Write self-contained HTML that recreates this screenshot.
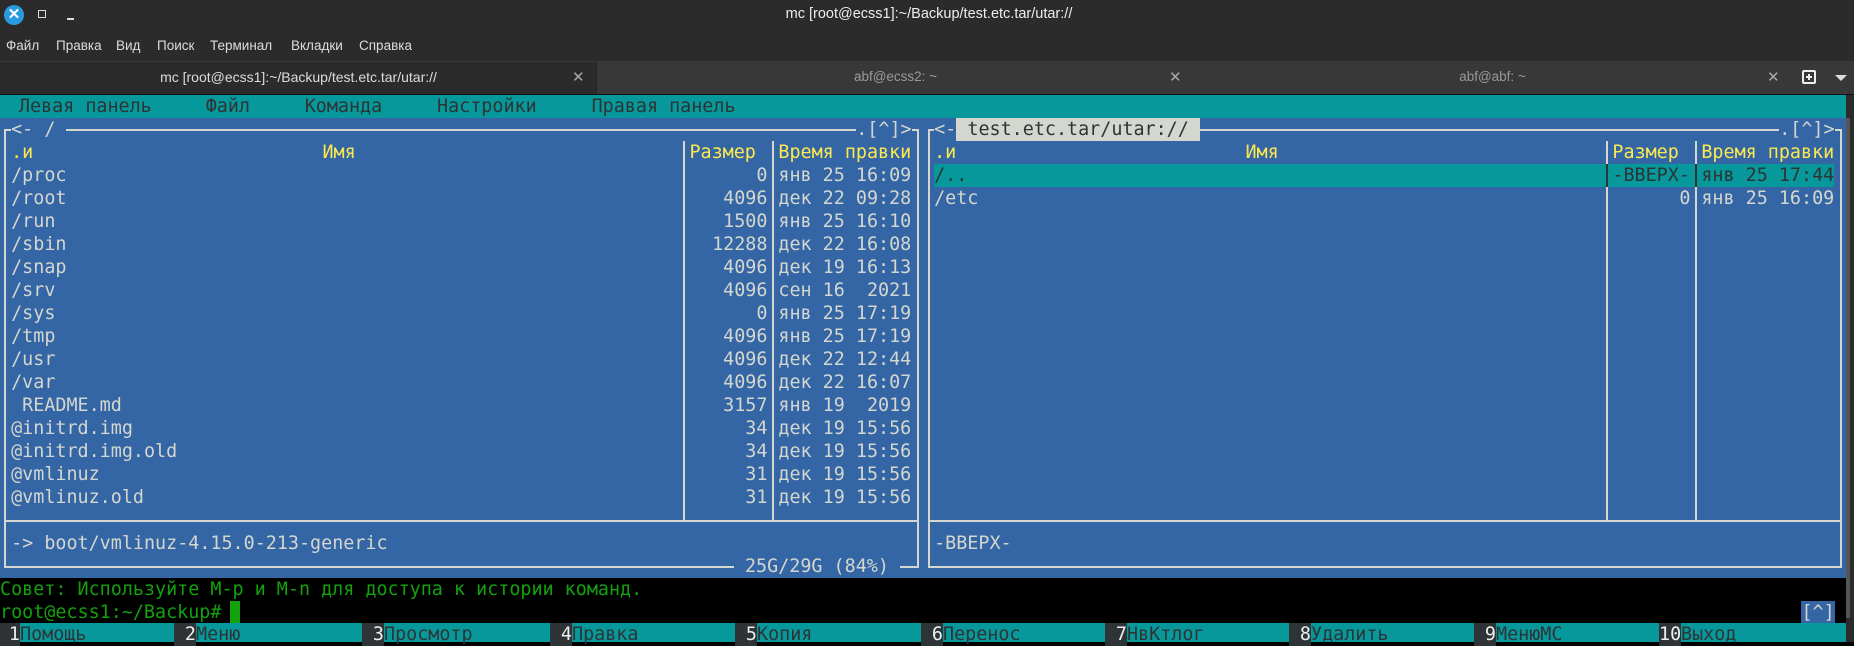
<!DOCTYPE html>
<html><head><meta charset="utf-8"><style>
*{margin:0;padding:0;box-sizing:border-box}
body{width:1854px;height:642px;overflow:hidden;background:#000;position:relative;font-family:"DejaVu Sans Mono","Liberation Mono",monospace}
.ui{font-family:"Liberation Sans","DejaVu Sans",sans-serif;position:absolute;white-space:nowrap}
.m{top:38px;color:#ddd;font-size:13.5px}
.t{position:absolute;left:calc(var(--c)*11.12px);top:calc(95px + var(--r)*23px);height:23px;line-height:23px;font-size:18.4px;white-space:pre;color:#d3d7cf}
.y{color:#fce94f}
.rt{text-align:right}
.bg{background:#3465a4}
.hl{position:absolute;height:2px;background:#d3d7cf}
.vl{position:absolute;width:2px;background:#d3d7cf}
.k{position:absolute;top:623px;height:23px;line-height:23px;font-size:18.4px;white-space:pre}
.kn{background:#2e3436;color:#eee;display:inline-block;width:22px;text-align:right}
.kl{color:#2e3436}
</style></head><body>
<!-- title bar -->
<div style="position:absolute;left:0;top:0;width:1854px;height:31px;background:#2b2b2b"></div>
<div style="position:absolute;left:4px;top:5px;width:20px;height:20px;border-radius:50%;background:#2a9ae0;color:#fff;font:bold 15px 'Liberation Sans';text-align:center;line-height:20px">✕</div>
<div style="position:absolute;left:38px;top:10px;width:8px;height:8px;border:1.5px solid #ddd"></div>
<div style="position:absolute;left:67px;top:18px;width:7px;height:1.5px;background:#ddd"></div>
<div class="ui" style="left:0;width:1854px;top:6px;text-align:center;color:#eee;font-size:14.5px;padding-left:4px">mc [root@ecss1]:~/Backup/test.etc.tar/utar://</div>
<!-- menu bar -->
<div style="position:absolute;left:0;top:31px;width:1854px;height:30px;background:#2b2b2b"></div>
<div class="ui m" style="left:6px">Файл</div>
<div class="ui m" style="left:56px">Правка</div>
<div class="ui m" style="left:116px">Вид</div>
<div class="ui m" style="left:157px">Поиск</div>
<div class="ui m" style="left:210px">Терминал</div>
<div class="ui m" style="left:291px">Вкладки</div>
<div class="ui m" style="left:359px">Справка</div>
<!-- tab bar -->
<div style="position:absolute;left:0;top:61px;width:1854px;height:34px;background:#383838"></div>
<div style="position:absolute;left:0;top:62px;width:597px;height:32px;background:#2b2b2b;border-right:1px solid #222"></div>
<div class="ui" style="left:0;width:597px;top:69px;text-align:center;color:#ddd;font-size:14px">mc [root@ecss1]:~/Backup/test.etc.tar/utar://</div>
<div class="ui" style="left:572px;top:68px;color:#aaa;font-size:15px">✕</div>
<div class="ui" style="left:597px;width:597px;top:69px;text-align:center;color:#999;font-size:13.5px">abf@ecss2: ~</div>
<div class="ui" style="left:1169px;top:68px;color:#aaa;font-size:15px">✕</div>
<div class="ui" style="left:1194px;width:597px;top:69px;text-align:center;color:#999;font-size:13.5px">abf@abf: ~</div>
<div class="ui" style="left:1767px;top:68px;color:#aaa;font-size:15px">✕</div>
<div style="position:absolute;left:1802px;top:70px;width:14px;height:14px;border:2px solid #eee;border-radius:2px"></div>
<div style="position:absolute;left:1806px;top:76px;width:6px;height:2px;background:#eee"></div>
<div style="position:absolute;left:1808px;top:74px;width:2px;height:6px;background:#eee"></div>
<div style="position:absolute;left:1835px;top:75px;width:0;height:0;border-left:6px solid transparent;border-right:6px solid transparent;border-top:6px solid #ddd"></div>
<div style="position:absolute;left:0;top:94px;width:1854px;height:1px;background:#111"></div>

<!-- terminal -->
<div style="position:absolute;left:0;top:95px;width:1846px;height:23px;background:#06989a"></div>
<div style="position:absolute;left:0;top:118px;width:1846px;height:460px;background:#3465a4"></div>
<div style="position:absolute;left:1846px;top:95px;width:8px;height:547px;background:#2b2b2b"></div>
<div style="position:absolute;left:1846px;top:118px;width:4px;height:500px;background:#555"></div>
<div class="t" style="--c:1.7;--r:0;color:#2e3436">Левая панель</div>
<div class="t" style="--c:18.5;--r:0;color:#2e3436">Файл</div>
<div class="t" style="--c:27.4;--r:0;color:#2e3436">Команда</div>
<div class="t" style="--c:39.3;--r:0;color:#2e3436">Настройки</div>
<div class="t" style="--c:53.2;--r:0;color:#2e3436">Правая панель</div>

<!-- frame lines -->
<div class="hl" style="left:5px;width:914px;top:129px"></div>
<div class="hl" style="left:5px;width:914px;top:520px"></div>
<div class="hl" style="left:5px;width:914px;top:566px"></div>
<div class="vl" style="left:4px;top:129px;height:439px"></div>
<div class="vl" style="left:917px;top:129px;height:439px"></div>
<div class="vl" style="left:683px;top:141px;height:379px"></div>
<div class="vl" style="left:772px;top:141px;height:379px"></div>
<div class="hl" style="left:928px;width:913px;top:129px"></div>
<div class="hl" style="left:928px;width:913px;top:520px"></div>
<div class="hl" style="left:928px;width:913px;top:566px"></div>
<div class="vl" style="left:928px;top:129px;height:439px"></div>
<div class="vl" style="left:1840px;top:129px;height:439px"></div>
<div class="vl" style="left:1606px;top:141px;height:379px"></div>
<div class="vl" style="left:1695px;top:141px;height:379px"></div>

<!-- left panel -->
<div class="t bg" style="--c:1;--r:1">&lt;- / </div>
<div class="t bg" style="--c:77;--r:1">.[^]&gt;</div>
<div class="t y" style="--c:1;--r:2">.и</div>
<div class="t y" style="--c:29;--r:2">Имя</div>
<div class="t y" style="--c:62;--r:2">Размер</div>
<div class="t y" style="--c:70;--r:2">Время правки</div>

<div class="t" style="--c:1;--r:3">/proc</div><div class="t rt" style="--c:62;--r:3;width:78px">0</div><div class="t" style="--c:70;--r:3">янв 25 16:09</div>
<div class="t" style="--c:1;--r:4">/root</div><div class="t rt" style="--c:62;--r:4;width:78px">4096</div><div class="t" style="--c:70;--r:4">дек 22 09:28</div>
<div class="t" style="--c:1;--r:5">/run</div><div class="t rt" style="--c:62;--r:5;width:78px">1500</div><div class="t" style="--c:70;--r:5">янв 25 16:10</div>
<div class="t" style="--c:1;--r:6">/sbin</div><div class="t rt" style="--c:62;--r:6;width:78px">12288</div><div class="t" style="--c:70;--r:6">дек 22 16:08</div>
<div class="t" style="--c:1;--r:7">/snap</div><div class="t rt" style="--c:62;--r:7;width:78px">4096</div><div class="t" style="--c:70;--r:7">дек 19 16:13</div>
<div class="t" style="--c:1;--r:8">/srv</div><div class="t rt" style="--c:62;--r:8;width:78px">4096</div><div class="t" style="--c:70;--r:8">сен 16  2021</div>
<div class="t" style="--c:1;--r:9">/sys</div><div class="t rt" style="--c:62;--r:9;width:78px">0</div><div class="t" style="--c:70;--r:9">янв 25 17:19</div>
<div class="t" style="--c:1;--r:10">/tmp</div><div class="t rt" style="--c:62;--r:10;width:78px">4096</div><div class="t" style="--c:70;--r:10">янв 25 17:19</div>
<div class="t" style="--c:1;--r:11">/usr</div><div class="t rt" style="--c:62;--r:11;width:78px">4096</div><div class="t" style="--c:70;--r:11">дек 22 12:44</div>
<div class="t" style="--c:1;--r:12">/var</div><div class="t rt" style="--c:62;--r:12;width:78px">4096</div><div class="t" style="--c:70;--r:12">дек 22 16:07</div>
<div class="t" style="--c:1;--r:13"> README.md</div><div class="t rt" style="--c:62;--r:13;width:78px">3157</div><div class="t" style="--c:70;--r:13">янв 19  2019</div>
<div class="t" style="--c:1;--r:14">@initrd.img</div><div class="t rt" style="--c:62;--r:14;width:78px">34</div><div class="t" style="--c:70;--r:14">дек 19 15:56</div>
<div class="t" style="--c:1;--r:15">@initrd.img.old</div><div class="t rt" style="--c:62;--r:15;width:78px">34</div><div class="t" style="--c:70;--r:15">дек 19 15:56</div>
<div class="t" style="--c:1;--r:16">@vmlinuz</div><div class="t rt" style="--c:62;--r:16;width:78px">31</div><div class="t" style="--c:70;--r:16">дек 19 15:56</div>
<div class="t" style="--c:1;--r:17">@vmlinuz.old</div><div class="t rt" style="--c:62;--r:17;width:78px">31</div><div class="t" style="--c:70;--r:17">дек 19 15:56</div>
<div class="t" style="--c:1;--r:19">-&gt; boot/vmlinuz-4.15.0-213-generic</div>
<div class="t bg" style="--c:66;--r:20"> 25G/29G (84%) </div>

<!-- right panel -->
<div class="t bg" style="--c:84;--r:1">&lt;-</div>
<div class="t" style="--c:86;--r:1;background:#d3d7cf;color:#2e3436"> test.etc.tar/utar:// </div>
<div class="t bg" style="--c:160;--r:1">.[^]&gt;</div>
<div class="t y" style="--c:84;--r:2">.и</div>
<div class="t y" style="--c:112;--r:2">Имя</div>
<div class="t y" style="--c:145;--r:2">Размер</div>
<div class="t y" style="--c:153;--r:2">Время правки</div>
<div style="position:absolute;left:934px;top:164px;width:900px;height:23px;background:#06989a"></div>
<div style="position:absolute;left:1606px;top:164px;width:2px;height:23px;background:#2e3436"></div>
<div style="position:absolute;left:1695px;top:164px;width:2px;height:23px;background:#2e3436"></div>
<div class="t" style="--c:84;--r:3;color:#2e3436">/..</div>
<div class="t" style="--c:145;--r:3;color:#2e3436">-ВВЕРХ-</div>
<div class="t" style="--c:153;--r:3;color:#2e3436">янв 25 17:44</div>
<div class="t" style="--c:84;--r:4">/etc</div><div class="t rt" style="--c:145;--r:4;width:78px">0</div><div class="t" style="--c:153;--r:4">янв 25 16:09</div>
<div class="t" style="--c:84;--r:19">-ВВЕРХ-</div>

<!-- command area -->
<div class="t" style="--c:0;--r:21;color:#13a10e">Совет: Используйте M-p и M-n для доступа к истории команд.</div>
<div class="t" style="--c:0;--r:22;color:#13a10e">root@ecss1:~/Backup# </div>
<div style="position:absolute;left:230px;top:601px;width:10px;height:22px;background:#13a10e"></div>
<div class="t" style="--c:162;--r:22;background:#3465a4;color:#d3d7cf">[^]</div>

<!-- keys -->
<div style="position:absolute;left:0;top:623px;width:1846px;height:19px;background:#06989a"></div>
<div class="k" style="left:-2px"><span class="kn">1</span><span class="kl">Помощь</span></div>
<div class="k" style="left:174px"><span class="kn">2</span><span class="kl">Меню</span></div>
<div class="k" style="left:362px"><span class="kn">3</span><span class="kl">Просмотр</span></div>
<div class="k" style="left:550px"><span class="kn">4</span><span class="kl">Правка</span></div>
<div class="k" style="left:735px"><span class="kn">5</span><span class="kl">Копия</span></div>
<div class="k" style="left:921px"><span class="kn">6</span><span class="kl">Перенос</span></div>
<div class="k" style="left:1105px"><span class="kn">7</span><span class="kl">НвКтлог</span></div>
<div class="k" style="left:1289px"><span class="kn">8</span><span class="kl">Удалить</span></div>
<div class="k" style="left:1474px"><span class="kn">9</span><span class="kl">МенюМС</span></div>
<div class="k" style="left:1659px"><span class="kn">10</span><span class="kl">Выход</span></div>
</body></html>
